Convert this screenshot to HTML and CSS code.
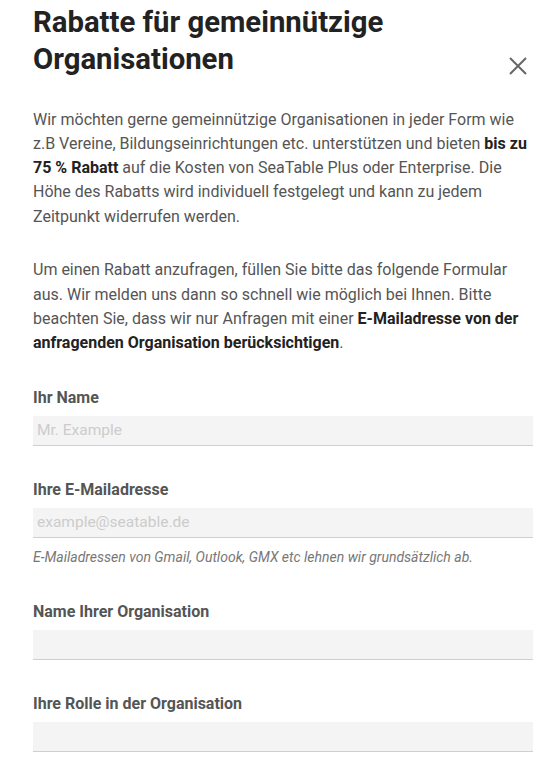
FILE: index.html
```html
<!DOCTYPE html>
<html lang="de">
<head>
<meta charset="utf-8">
<title>Rabatte für gemeinnützige Organisationen</title>
<link rel="stylesheet" href="styles.css">
</head>
<body>
<div class="modal">
  <div class="header">
    <h1 class="title">Rabatte für gemeinnützige Organisationen</h1>
    <button class="close" aria-label="Schließen">
      <svg width="18" height="18" viewBox="0 0 18 18"><path d="M1 1 L17 17 M17 1 L1 17" stroke="#666" stroke-width="2" fill="none"/></svg>
    </button>
  </div>
  <p class="text first">Wir möchten gerne gemeinnützige Organisationen in jeder Form wie z.B Vereine, Bildungseinrichtungen etc. unterstützen und bieten <strong>bis zu 75 % Rabatt</strong> auf die Kosten von SeaTable Plus oder Enterprise. Die Höhe des Rabatts wird individuell festgelegt und kann zu jedem Zeitpunkt widerrufen werden.</p>
  <p class="text second">Um einen Rabatt anzufragen, füllen Sie bitte das folgende Formular aus. Wir melden uns dann so schnell wie möglich bei Ihnen. Bitte beachten Sie, dass wir nur Anfragen mit einer <strong>E-Mailadresse von der anfragenden Organisation berücksichtigen</strong>.</p>
  <form class="form">
    <div class="field">
      <label class="label" for="name">Ihr Name</label>
      <input class="input" id="name" type="text" placeholder="Mr. Example">
    </div>
    <div class="field">
      <label class="label" for="email">Ihre E-Mailadresse</label>
      <input class="input" id="email" type="text" placeholder="example@seatable.de">
      <div class="help">E-Mailadressen von Gmail, Outlook, GMX etc lehnen wir grundsätzlich ab.</div>
    </div>
    <div class="field">
      <label class="label" for="org">Name Ihrer Organisation</label>
      <input class="input" id="org" type="text">
    </div>
    <div class="field">
      <label class="label" for="role">Ihre Rolle in der Organisation</label>
      <input class="input" id="role" type="text">
    </div>
  </form>
</div>
</body>
</html>
```

FILE: styles.css
```css
html, body {
  margin: 0;
  padding: 0;
  background: #ffffff;
}
body {
  font-family: Roboto, "Liberation Sans", Arial, sans-serif;
  overflow: hidden;
}
.modal {
  padding: 4px 15px 0 33px;
}
.header {
  display: flex;
  align-items: flex-start;
  justify-content: space-between;
}
.title {
  margin: 0;
  font-size: 29.3px;
  line-height: 37px;
  font-weight: 700;
  color: #222222;
  max-width: 420px;
}
.close {
  border: 0;
  background: transparent;
  padding: 0;
  margin: 53px 6px 0 0;
  width: 18px;
  height: 18px;
  cursor: pointer;
  display: block;
}
.close svg {
  display: block;
}
.text {
  margin: 0;
  font-size: 16px;
  line-height: 24.3px;
  color: #555555;
}
.text strong {
  font-weight: 700;
  color: #222222;
}
.text.first {
  margin-top: 29.5px;
}
.text.second {
  margin-top: 29.5px;
}
.form {
  margin-top: 30px;
  display: flex;
  flex-direction: column;
  gap: 32px;
}
.field {
  display: flex;
  flex-direction: column;
}
.label {
  font-size: 16px;
  line-height: 24px;
  font-weight: 700;
  color: #555555;
  margin-bottom: 6px;
}
.input {
  box-sizing: border-box;
  height: 30px;
  width: 100%;
  border: 0;
  border-bottom: 1px solid #cfcfcf;
  background: #f4f4f4;
  padding: 0 4px;
  font-family: Roboto, "Liberation Sans", Arial, sans-serif;
  font-size: 15.5px;
  color: #333333;
  outline: none;
}
.input::placeholder {
  color: #cccccc;
}
.help {
  margin-top: 8px;
  font-size: 14px;
  line-height: 22px;
  font-style: italic;
  color: #777777;
}
```
